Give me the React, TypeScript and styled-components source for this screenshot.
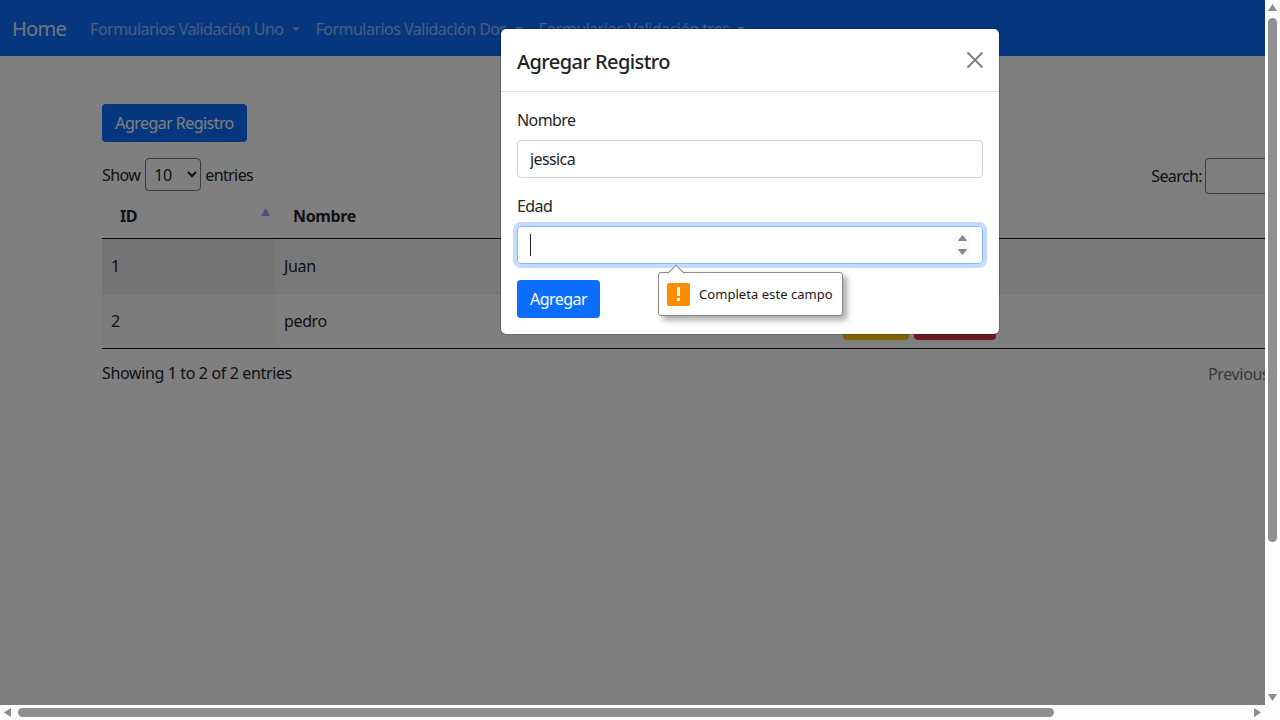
import React from 'react';
import styled, { createGlobalStyle } from 'styled-components';

const GlobalStyle = createGlobalStyle`
  * { box-sizing: border-box; }
  html, body { margin: 0; height: 100%; overflow: hidden; }
  body {
    font-family: "Noto Sans", "Open Sans", sans-serif;
    font-size: 16px;
    line-height: 24px;
    letter-spacing: -0.36px;
    color: #212529;
    background: #fff;
  }
`;

const Frame = styled.div`
  display: grid;
  grid-template-columns: 1265px 15px;
  grid-template-rows: 705px 15px;
  width: 1280px;
  height: 720px;
  overflow: hidden;
  background: #fff;
`;

const Viewport = styled.div`
  position: relative;
  overflow: hidden;
`;

const Navbar = styled.nav`
  display: flex;
  align-items: center;
  height: 56px;
  padding: 2px 12px 0;
  background: #0d6efd;
  white-space: nowrap;
`;

const Brand = styled.a`
  margin-right: 16px;
  font-size: 20px;
  letter-spacing: -0.7px;
  color: rgba(255, 255, 255, 0.9);
`;

const NavItem = styled.a`
  display: flex;
  align-items: center;
  padding: 0 8px;
  letter-spacing: -0.52px;
  color: rgba(255, 255, 255, 0.55);

  &::after {
    content: '';
    margin-left: 8px;
    border-top: 4.8px solid currentColor;
    border-left: 4.8px solid transparent;
    border-right: 4.8px solid transparent;
  }
`;

const Content = styled.main`
  width: 1315px;
  margin-left: 102px;
  padding-top: 48px;
`;

const AddButton = styled.button`
  display: block;
  height: 38px;
  width: 145px;
  margin-bottom: 16px;
  border: 0;
  border-radius: 4px;
  background: #0d6efd;
  color: #fff;
  font: inherit;
  letter-spacing: -0.55px;
`;

const TableTools = styled.div`
  display: flex;
  justify-content: space-between;
  align-items: flex-start;
  height: 40px;
`;

const LengthLabel = styled.label`
  display: flex;
  align-items: center;
  gap: 4px;
  height: 33px;
  letter-spacing: -0.6px;
`;

const LengthSelect = styled.select`
  width: 56px;
  height: 33px;
  margin-left: 1px;
  padding: 4px;
  border: 1px solid #767676;
  border-radius: 4px;
  background: #fff;
  color: #212529;
  font: inherit;
  letter-spacing: -0.32px;
`;

const SearchLabel = styled.label`
  display: flex;
  align-items: center;
  gap: 3px;
  height: 36px;
  letter-spacing: -0.6px;
`;

const SearchInput = styled.input`
  width: 212px;
  height: 36px;
  border: 1px solid #767676;
  border-radius: 4px;
  background: #fff;
`;

const Table = styled.table`
  width: 100%;
  table-layout: fixed;
  border-collapse: collapse;
  border-bottom: 1px solid #111;
`;

const HeadCell = styled.th<{ $width?: number }>`
  width: ${p => (p.$width ? `${p.$width}px` : 'auto')};
  height: 40px;
  padding: 0 18px 3px;
  border-bottom: 1px solid #111;
  text-align: left;
  font-weight: 700;
  color: #212529;
`;

const SortedHead = styled.div`
  display: flex;
  justify-content: space-between;
  align-items: center;
  margin-right: -13px;
`;

const SortArrow = styled.svg`
  width: 9px;
  height: 8px;
  margin-bottom: 9px;
  fill: #9e9cf5;
`;

const Row = styled.tr<{ $striped?: boolean }>`
  background: ${p => (p.$striped ? '#f2f2f2' : '#fff')};
  border-top: 1px solid #dee2e6;
`;

const Cell = styled.td<{ $sorted?: boolean; $striped?: boolean }>`
  height: 54px;
  padding: 8px 9px;
  background: ${p =>
    p.$sorted ? (p.$striped ? '#eaeaea' : '#f9f9f9') : 'transparent'};
`;

const Actions = styled.div`
  display: flex;
  gap: 5px;
`;

const ActionButton = styled.button<{ $bg: string; $fg: string; $width: number }>`
  width: ${p => p.$width}px;
  height: 38px;
  border: 0;
  border-radius: 4px;
  background: ${p => p.$bg};
  color: ${p => p.$fg};
  font: inherit;
  letter-spacing: inherit;
`;

const TableFooter = styled.div`
  display: flex;
  justify-content: space-between;
  padding-top: 12px;
`;

const Pager = styled.div`
  width: 209px;
  padding-top: 1px;
  color: #6c757d;
`;

const Backdrop = styled.div`
  position: absolute;
  inset: 0;
  background: rgba(0, 0, 0, 0.5);
`;

const Modal = styled.section`
  position: absolute;
  top: 28px;
  left: 500px;
  width: 500px;
  height: 307px;
  border: 1px solid rgba(0, 0, 0, 0.2);
  border-radius: 6px;
  background: #fff;
  background-clip: padding-box;
`;

const ModalHeader = styled.header`
  display: flex;
  justify-content: space-between;
  align-items: center;
  height: 63px;
  padding: 0 15px 0 16px;
  border-bottom: 1px solid #dee2e6;
`;

const ModalTitle = styled.h5`
  margin: 3px 0 0;
  font-size: 20px;
  font-weight: 500;
  line-height: 30px;
  letter-spacing: -0.57px;
`;

const CloseIcon = styled.svg`
  display: block;
  width: 18px;
  height: 18px;
  stroke: #808080;
  stroke-width: 2;
`;

const ModalBody = styled.div`
  padding: 16px;
`;

const FieldLabel = styled.label`
  display: block;
  height: 24px;
  margin-bottom: 8px;
  letter-spacing: -0.6px;
`;

const Field = styled.div`
  margin-bottom: 16px;
`;

const TextInput = styled.input`
  display: block;
  width: 100%;
  height: 38px;
  padding: 0 12px;
  border: 1px solid #ced4da;
  border-radius: 4px;
  color: #212529;
  font: inherit;
  letter-spacing: -0.6px;
  outline: none;
`;

const NumberInput = styled.div`
  display: flex;
  align-items: center;
  height: 38px;
  padding: 0 12px;
  border: 1px solid #86b7fe;
  border-radius: 4px;
  box-shadow: 0 0 0 4px #c2dbfe;
`;

const Caret = styled.span`
  width: 1px;
  height: 22px;
  background: #212529;
`;

const Spinner = styled.svg`
  width: 15px;
  height: 24px;
  margin-left: auto;
  background: #fafafa;
  fill: #8a8a8a;
  stroke: #8a8a8a;
  stroke-width: 1;
  stroke-linejoin: round;
`;

const SubmitButton = styled.button`
  width: 83px;
  height: 38px;
  border: 0;
  border-radius: 4px;
  background: #0d6efd;
  color: #fff;
  font: inherit;
  letter-spacing: -0.55px;
`;

const Bubble = styled.div`
  position: absolute;
  top: 243px;
  left: 157px;
  display: flex;
  align-items: center;
  gap: 9px;
  width: 185px;
  height: 44px;
  padding: 0 8px;
  border: 1px solid #8a8a8a;
  border-radius: 3px;
  background: #fff;
  box-shadow: 4px 4px 6px rgba(0, 0, 0, 0.35);
  font-size: 13px;
  letter-spacing: 0.05px;
  color: #1a1a1a;
  white-space: nowrap;

  &::before {
    content: '';
    position: absolute;
    top: -6px;
    left: 11px;
    width: 11px;
    height: 11px;
    border-top: 1px solid #8a8a8a;
    border-left: 1px solid #8a8a8a;
    background: #fff;
    transform: rotate(45deg);
  }
`;

const WarningIcon = styled.svg`
  flex: none;
  width: 23px;
  height: 23px;
`;

const VTrack = styled.div`
  display: flex;
  flex-direction: column;
  align-items: center;
  background: #fdfdfd;
`;

const HTrack = styled.div`
  display: flex;
  align-items: center;
  background: #fdfdfd;
`;

const Corner = styled.div`
  background: #fdfdfd;
`;

const ScrollArrow = styled.svg`
  flex: none;
  width: 15px;
  height: 15px;
  fill: #8b8b8b;
`;

const VThumb = styled.div`
  width: 9px;
  height: 524px;
  margin-top: 3px;
  margin-bottom: auto;
  border-radius: 5px;
  background: #8f8f8f;
`;

const HThumb = styled.div`
  width: 1036px;
  height: 9px;
  margin-left: 3px;
  margin-right: auto;
  border-radius: 5px;
  background: #8f8f8f;
`;

const App = () => (
  <>
    <GlobalStyle />
    <Frame>
      <Viewport>
        <Navbar>
          <Brand>Home</Brand>
          <NavItem>Formularios Validación Uno</NavItem>
          <NavItem>Formularios Validación Dos</NavItem>
          <NavItem>Formularios Validación tres</NavItem>
        </Navbar>
        <Content>
          <AddButton>Agregar Registro</AddButton>
          <TableTools>
            <LengthLabel>
              Show
              <LengthSelect defaultValue="10">
                <option>10</option>
                <option>25</option>
                <option>50</option>
              </LengthSelect>
              entries
            </LengthLabel>
            <SearchLabel>
              Search:
              <SearchInput />
            </SearchLabel>
          </TableTools>
          <Table>
            <thead>
              <tr>
                <HeadCell $width={173}>
                  <SortedHead>
                    ID
                    <SortArrow viewBox="0 0 9 8">
                      <path d="M4.5 0 9 8H0z" />
                    </SortArrow>
                  </SortedHead>
                </HeadCell>
                <HeadCell $width={559}>Nombre</HeadCell>
                <HeadCell />
              </tr>
            </thead>
            <tbody>
              <Row $striped>
                <Cell $sorted $striped>1</Cell>
                <Cell>Juan</Cell>
                <Cell>
                  <Actions>
                    <ActionButton $bg="#ffc107" $fg="#000" $width={66}>Editar</ActionButton>
                    <ActionButton $bg="#dc3545" $fg="#fff" $width={82}>Eliminar</ActionButton>
                  </Actions>
                </Cell>
              </Row>
              <Row>
                <Cell $sorted>2</Cell>
                <Cell>pedro</Cell>
                <Cell>
                  <Actions>
                    <ActionButton $bg="#ffc107" $fg="#000" $width={66}>Editar</ActionButton>
                    <ActionButton $bg="#dc3545" $fg="#fff" $width={82}>Eliminar</ActionButton>
                  </Actions>
                </Cell>
              </Row>
            </tbody>
          </Table>
          <TableFooter>
            <span>Showing 1 to 2 of 2 entries</span>
            <Pager>Previous</Pager>
          </TableFooter>
        </Content>
        <Backdrop />
        <Modal>
          <ModalHeader>
            <ModalTitle>Agregar Registro</ModalTitle>
            <CloseIcon viewBox="0 0 18 18">
              <path d="M1.500 1.500l15 15M16.500 1.500l-15 15" />
            </CloseIcon>
          </ModalHeader>
          <ModalBody>
            <Field>
              <FieldLabel>Nombre</FieldLabel>
              <TextInput value="jessica" readOnly />
            </Field>
            <Field>
              <FieldLabel>Edad</FieldLabel>
              <NumberInput>
                <Caret />
                <Spinner viewBox="0 0 15 24">
                  <path d="M7.500 2.500 11.500 7.500H3.500zM3.500 16.500h8L7.500 21.500z" />
                </Spinner>
              </NumberInput>
            </Field>
            <SubmitButton>Agregar</SubmitButton>
          </ModalBody>
          <Bubble>
            <WarningIcon viewBox="0 0 23 23">
              <rect width="23" height="23" rx="2" fill="#ff8c00" />
              <rect x="10" y="4" width="3" height="9" fill="#fff" />
              <rect x="10" y="15" width="3" height="3" fill="#fff" />
            </WarningIcon>
            Completa este campo
          </Bubble>
        </Modal>
      </Viewport>
      <VTrack>
        <ScrollArrow viewBox="0 0 15 15">
          <path d="M7.500 4 12 11H3z" />
        </ScrollArrow>
        <VThumb />
        <ScrollArrow viewBox="0 0 15 15">
          <path d="M3 4h9l-4.500 7z" />
        </ScrollArrow>
      </VTrack>
      <HTrack>
        <ScrollArrow viewBox="0 0 15 15">
          <path d="M11 3v9L4 7.500z" />
        </ScrollArrow>
        <HThumb />
        <ScrollArrow viewBox="0 0 15 15">
          <path d="M4 3l7 4.500L4 12z" />
        </ScrollArrow>
      </HTrack>
      <Corner />
    </Frame>
  </>
);

export default App;
